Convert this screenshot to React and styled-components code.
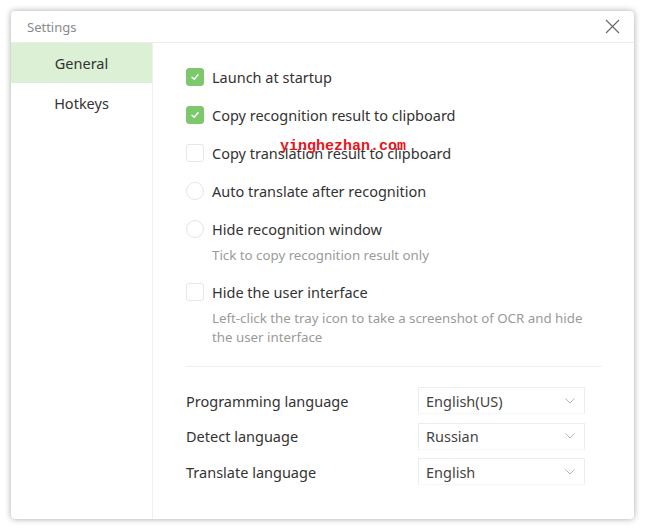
import React, { useState } from 'react';
import styled, { createGlobalStyle } from 'styled-components';

const GlobalStyle = createGlobalStyle`
  html, body {
    margin: 0;
    padding: 0;
    background: #ffffff;
  }
  body {
    font-family: "Noto Sans", "Open Sans", sans-serif;
  }
`;

const Page = styled.div`
  width: 645px;
  height: 530px;
  padding: 11px;
  box-sizing: border-box;
  position: relative;
`;

const Window = styled.div`
  width: 623px;
  height: 508px;
  border-radius: 4px;
  background: #fff;
  box-shadow: 0 0 6px rgba(0, 0, 0, 0.35);
  display: flex;
  flex-direction: column;
  overflow: hidden;
`;

const TitleBar = styled.div`
  height: 31px;
  flex: 0 0 31px;
  border-bottom: 1px solid #ececec;
  display: flex;
  align-items: center;
  justify-content: space-between;
  padding: 0 14px 0 16px;
`;

const Title = styled.div`
  font-size: 13px;
  color: #8a8a8a;
`;

const CloseButton = styled.button`
  border: none;
  background: none;
  padding: 0;
  width: 16px;
  height: 16px;
  display: flex;
  align-items: center;
  justify-content: center;
  cursor: pointer;
`;

const Main = styled.div`
  flex: 1;
  display: flex;
`;

const Sidebar = styled.div`
  width: 141px;
  border-right: 1px solid #efefef;
  display: flex;
  flex-direction: column;
`;

const NavItem = styled.div`
  height: 40px;
  line-height: 40px;
  text-align: center;
  font-size: 14.5px;
  color: #333;
  background: ${({ $active }) => ($active ? '#dcf0d5' : 'transparent')};
  cursor: pointer;
`;

const Content = styled.div`
  flex: 1;
  padding: 15px 32px 0 33px;
  display: flex;
  flex-direction: column;
  position: relative;
`;

const Option = styled.label`
  height: 38px;
  display: flex;
  align-items: center;
  gap: 8px;
  font-size: 14.5px;
  color: #333;
  cursor: pointer;
`;

const Box = styled.span`
  width: 18px;
  height: 18px;
  box-sizing: border-box;
  border-radius: ${({ $round }) => ($round ? '50%' : '3px')};
  border: 1px solid ${({ $checked }) => ($checked ? '#7cc86a' : '#e6e6e6')};
  background: ${({ $checked }) => ($checked ? '#7cc86a' : '#fff')};
  display: flex;
  align-items: center;
  justify-content: center;
  flex: 0 0 18px;
`;

const Hint = styled.div`
  padding-left: 26px;
  max-width: 380px;
  margin-top: -2px;
  margin-bottom: 8px;
  font-size: 13.3px;
  line-height: 19px;
  color: #9a9a9a;
`;

const Divider = styled.div`
  height: 1px;
  background: #efefef;
  margin: 11px 0 16px;
`;

const LangGrid = styled.div`
  display: grid;
  grid-template-columns: 232px 167px;
  grid-auto-rows: 35.5px;
  align-items: center;
`;

const LangLabel = styled.div`
  font-size: 14.5px;
  color: #333;
`;

const Select = styled.div`
  height: 27px;
  box-sizing: border-box;
  border: 1px solid #ededed;
  border-bottom-color: #f7f7f7;
  display: flex;
  align-items: center;
  justify-content: space-between;
  padding: 0 9px 0 7px;
  font-size: 14.5px;
  color: #444;
  cursor: pointer;
`;

const Watermark = styled.div`
  position: absolute;
  left: 127px;
  top: 95px;
  font-family: "Liberation Mono", monospace;
  font-weight: bold;
  font-size: 15px;
  color: #e8141c;
  pointer-events: none;
`;

const Check = () => (
  <svg width="10" height="10" viewBox="0 0 10 10">
    <path d="M2 5.2 L4.2 7.2 L8 2.8" fill="none" stroke="#fff" strokeWidth="1.5" strokeLinecap="round" strokeLinejoin="round" />
  </svg>
);

const Chevron = () => (
  <svg width="10" height="6" viewBox="0 0 10 6">
    <path d="M0.5 0.5 L5 5 L9.5 0.5" fill="none" stroke="#b5b5b5" strokeWidth="1" />
  </svg>
);

const options = [
  { id: 'startup', label: 'Launch at startup', checked: true },
  { id: 'copyOcr', label: 'Copy recognition result to clipboard', checked: true },
  { id: 'copyTr', label: 'Copy translation result to clipboard', checked: false },
  { id: 'autoTr', label: 'Auto translate after recognition', checked: false, round: true },
  { id: 'hideWin', label: 'Hide recognition window', checked: false, round: true, hint: 'Tick to copy recognition result only' },
  { id: 'hideUi', label: 'Hide the user interface', checked: false, hint: 'Left-click the tray icon to take a screenshot of OCR and hide the user interface' },
];

const languages = [
  { label: 'Programming language', value: 'English(US)' },
  { label: 'Detect language', value: 'Russian' },
  { label: 'Translate language', value: 'English' },
];

export default function App() {
  const [tab, setTab] = useState('General');
  const [state, setState] = useState(
    Object.fromEntries(options.map((o) => [o.id, o.checked]))
  );

  return (
    <>
      <GlobalStyle />
      <Page>
        <Window>
          <TitleBar>
            <Title>Settings</Title>
            <CloseButton aria-label="Close">
              <svg width="15" height="15" viewBox="0 0 15 15">
                <path d="M1 1 L14 14 M14 1 L1 14" stroke="#666" strokeWidth="1.1" />
              </svg>
            </CloseButton>
          </TitleBar>
          <Main>
            <Sidebar>
              {['General', 'Hotkeys'].map((t) => (
                <NavItem key={t} $active={tab === t} onClick={() => setTab(t)}>
                  {t}
                </NavItem>
              ))}
            </Sidebar>
            <Content>
              {options.map((o) => (
                <React.Fragment key={o.id}>
                  <Option onClick={() => setState((s) => ({ ...s, [o.id]: !s[o.id] }))}>
                    <Box $checked={state[o.id]} $round={o.round}>
                      {state[o.id] && <Check />}
                    </Box>
                    {o.label}
                  </Option>
                  {o.hint && <Hint>{o.hint}</Hint>}
                </React.Fragment>
              ))}
              <Divider />
              <LangGrid>
                {languages.map((l) => (
                  <React.Fragment key={l.label}>
                    <LangLabel>{l.label}</LangLabel>
                    <Select>
                      {l.value}
                      <Chevron />
                    </Select>
                  </React.Fragment>
                ))}
              </LangGrid>
              <Watermark>yinghezhan.com</Watermark>
            </Content>
          </Main>
        </Window>
      </Page>
    </>
  );
}
